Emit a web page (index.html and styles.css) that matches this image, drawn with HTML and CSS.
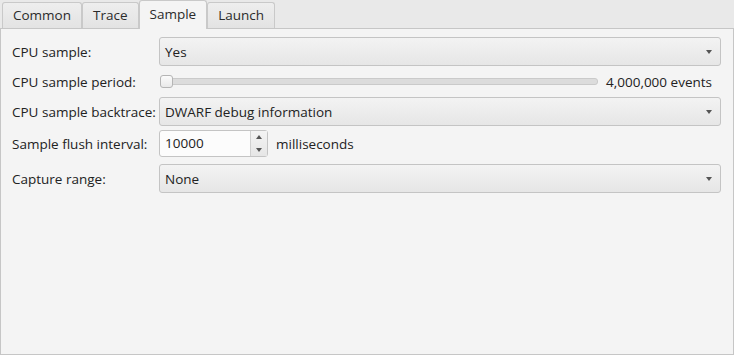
FILE: index.html
```html
<!DOCTYPE html>
<html lang="en">
<head>
    <meta charset="UTF-8">
    <title>Sample settings</title>
    <link rel="stylesheet" href="styles.css">
</head>
<body>
    <div class="tabs">
        <div class="tab">Common</div>
        <div class="tab">Trace</div>
        <div class="tab active">Sample</div>
        <div class="tab">Launch</div>
    </div>
    <div class="panel">
        <div class="row">
            <label>CPU sample:</label>
            <div class="combo"><span>Yes</span><span class="arrow"></span></div>
        </div>
        <div class="row slim">
            <label>CPU sample period:</label>
            <div class="slider"><div class="track"></div><div class="thumb"></div></div>
            <span class="unit">4,000,000 events</span>
        </div>
        <div class="row">
            <label>CPU sample backtrace:</label>
            <div class="combo"><span>DWARF debug information</span><span class="arrow"></span></div>
        </div>
        <div class="row spin">
            <label>Sample flush interval:</label>
            <div class="spinner">
                <span class="value">10000</span>
                <div class="buttons">
                    <span class="up"></span>
                    <span class="down"></span>
                </div>
            </div>
            <span class="unit">milliseconds</span>
        </div>
        <div class="row last">
            <label>Capture range:</label>
            <div class="combo"><span>None</span><span class="arrow"></span></div>
        </div>
    </div>
</body>
</html>
```

FILE: styles.css
```css
body, html {
    margin: 0;
    padding: 0;
    width: 734px;
    height: 355px;
    background-color: #e9e9e9;
    font-family: 'Open Sans', 'Noto Sans', sans-serif;
    font-size: 13.5px;
    color: #222;
    overflow: hidden;
}
.tabs {
    display: flex;
    height: 28px;
    padding-left: 2px;
    align-items: flex-end;
}
.tab {
    height: 26px;
    line-height: 25px;
    padding: 0 10px;
    border: 1px solid #c9c9c9;
    border-bottom: none;
    border-radius: 3px 3px 0 0;
    background: linear-gradient(#eeeeee, #e3e3e3);
    box-sizing: border-box;
    color: #2b2b2b;
}
.tab.active {
    height: 29px;
    line-height: 26px;
    padding: 0 10px;
    background: #f4f4f4;
    position: relative;
    z-index: 1;
    margin-bottom: -1px;
}
.panel {
    height: 327px;
    box-sizing: border-box;
    border: 1px solid #c6c6c6;
    background-color: #f4f4f4;
    padding: 8px 12px 0 11px;
    display: flex;
    flex-direction: column;
    gap: 4px;
}
.row {
    display: flex;
    align-items: center;
    height: 29px;
}
.row.slim {
    height: 23px;
}
.row.spin {
    height: 27px;
}
.row.last {
    margin-top: 3px;
}
.row label {
    width: 147px;
    flex: 0 0 147px;
}
.combo {
    flex: 1;
    height: 29px;
    box-sizing: border-box;
    border: 1px solid #c4c4c4;
    border-radius: 3px;
    background: linear-gradient(#f3f3f3, #e6e6e6);
    display: flex;
    align-items: center;
    justify-content: space-between;
    padding: 0 8px 0 5px;
}
.arrow {
    width: 0;
    height: 0;
    border-left: 3.5px solid transparent;
    border-right: 3.5px solid transparent;
    border-top: 4px solid #555;
}
.slider {
    flex: 1;
    position: relative;
    height: 13px;
    margin-right: 8px;
}
.track {
    position: absolute;
    left: 1px;
    right: 0;
    top: 3px;
    height: 5px;
    border: 1px solid #cacaca;
    border-radius: 3px;
    background: #dcdcdc;
}
.thumb {
    position: absolute;
    left: 1px;
    top: 0;
    width: 11px;
    height: 11px;
    border: 1px solid #b5b5b5;
    border-radius: 3px;
    background: linear-gradient(#fbfbfb, #e9e9e9);
}
.row.slim .unit {
    margin-right: 9px;
}
.spinner {
    width: 109px;
    height: 27px;
    box-sizing: border-box;
    border: 1px solid #c4c4c4;
    border-radius: 3px;
    background: #fcfcfc;
    display: flex;
    margin-right: 8px;
}
.spinner .value {
    flex: 1;
    line-height: 25px;
    padding-left: 5px;
}
.buttons {
    width: 16px;
    border-left: 1px solid #d0d0d0;
    display: flex;
    flex-direction: column;
    background: linear-gradient(#f3f3f3, #e6e6e6);
}
.buttons span {
    flex: 1;
    display: flex;
    align-items: center;
    justify-content: center;
}
.up::after {
    content: '';
    border-left: 3px solid transparent;
    border-right: 3px solid transparent;
    border-bottom: 4px solid #555;
}
.down::after {
    content: '';
    border-left: 3px solid transparent;
    border-right: 3px solid transparent;
    border-top: 4px solid #555;
}
```
